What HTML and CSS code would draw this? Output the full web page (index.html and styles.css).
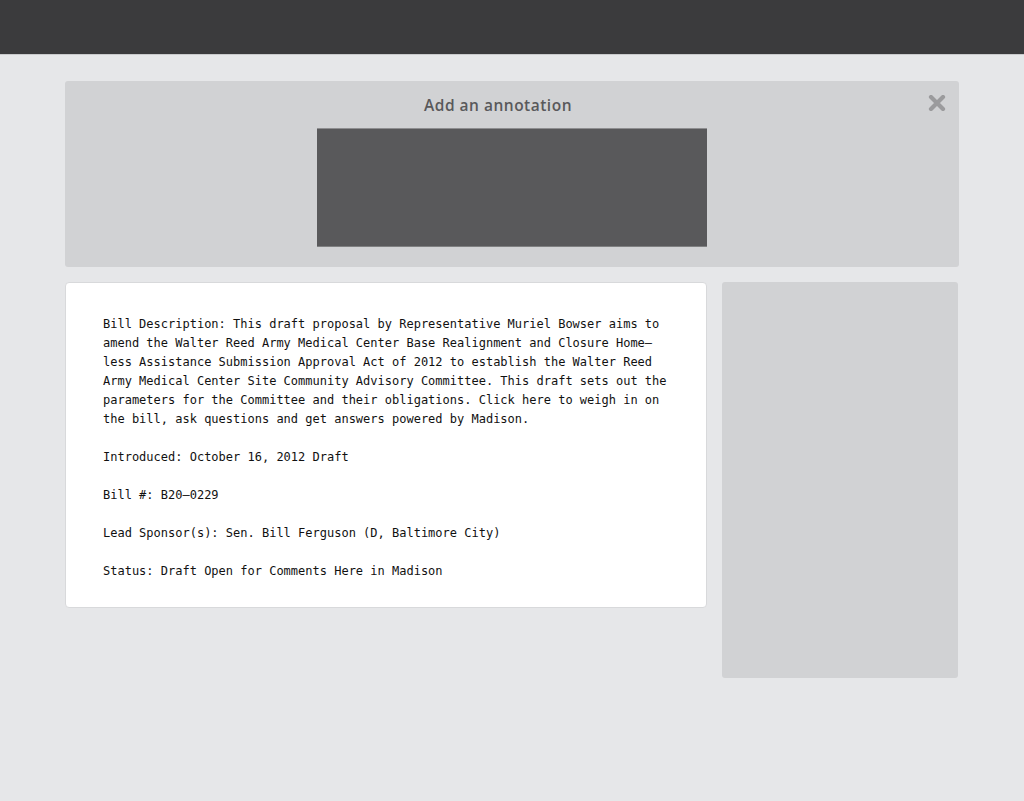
FILE: index.html
```html
<!DOCTYPE html>
<html>
<head>
<meta charset="utf-8">
<link rel="stylesheet" href="styles.css">
</head>
<body>
<header class="topbar"></header>
<main class="container">
  <section class="annotate">
    <h2 class="annotate-title">Add an annotation</h2>
    <button class="close" aria-label="Close">
      <svg width="18" height="16" viewBox="0 0 18 16"><path d="M3 2 L15 14 M15 2 L3 14" stroke="#9b9b9d" stroke-width="4.2" stroke-linecap="round"/></svg>
    </button>
    <div class="annotate-box"></div>
  </section>
  <div class="columns">
    <article class="doc">
      <p>Bill Description: This draft proposal by Representative Muriel Bowser aims to<br>amend the Walter Reed Army Medical Center Base Realignment and Closure Home–<br>less Assistance Submission Approval Act of 2012 to establish the Walter Reed<br>Army Medical Center Site Community Advisory Committee. This draft sets out the<br>parameters for the Committee and their obligations. Click here to weigh in on<br>the bill, ask questions and get answers powered by Madison.</p>
      <p>Introduced: October 16, 2012 Draft</p>
      <p>Bill #: B20–0229</p>
      <p>Lead Sponsor(s): Sen. Bill Ferguson (D, Baltimore City)</p>
      <p>Status: Draft Open for Comments Here in Madison</p>
    </article>
    <aside class="sidebar"></aside>
  </div>
</main>
</body>
</html>
```
FILE: styles.css
```css
html, body {
  margin: 0;
  padding: 0;
}
body {
  background: #e6e7e9;
  min-height: 801px;
  font-family: "DejaVu Sans Mono", monospace;
}
.topbar {
  height: 54px;
  background: #3b3b3d;
  border-bottom: 1px solid #c9cacc;
}
.container {
  width: 894px;
  margin: 26px auto 0;
}
.annotate {
  position: relative;
  background: #d1d2d4;
  border-radius: 3px;
  height: 186px;
  display: flex;
  flex-direction: column;
  align-items: center;
}
.annotate-title {
  margin: 14px 0 0 -28px;
  height: 20px;
  line-height: 20px;
  font-family: "Open Sans", "Noto Sans", sans-serif;
  font-weight: 600;
  font-size: 15.5px;
  color: #59595b;
  letter-spacing: 0.5px;
}
.close {
  position: absolute;
  top: 14px;
  right: 13px;
  border: 0;
  background: none;
  padding: 0;
  width: 18px;
  height: 16px;
  cursor: pointer;
}
.close svg { display: block; }
.annotate-box {
  margin-top: 13px;
  width: 390px;
  height: 117px;
  background: #59595b;
  border-top: 1px solid #8e8e90;
  box-shadow: 0 1px 0 #7f8081;
}
.columns {
  display: flex;
  gap: 15px;
  margin-top: 15px;
  align-items: flex-start;
}
.doc {
  width: 642px;
  box-sizing: border-box;
  background: #fff;
  border: 1.5px solid #d8d9db;
  border-radius: 4px;
  padding: 32px 36px 23px 37px;
  font-size: 12px;
  line-height: 19px;
  color: #111;
  height: 326px;
}
.doc p {
  margin: 0 0 19px;
  white-space: nowrap;
}
.doc p:last-child { margin-bottom: 0; }
.sidebar {
  width: 236px;
  height: 396px;
  background: #d1d2d4;
  border-radius: 3px;
}
```
